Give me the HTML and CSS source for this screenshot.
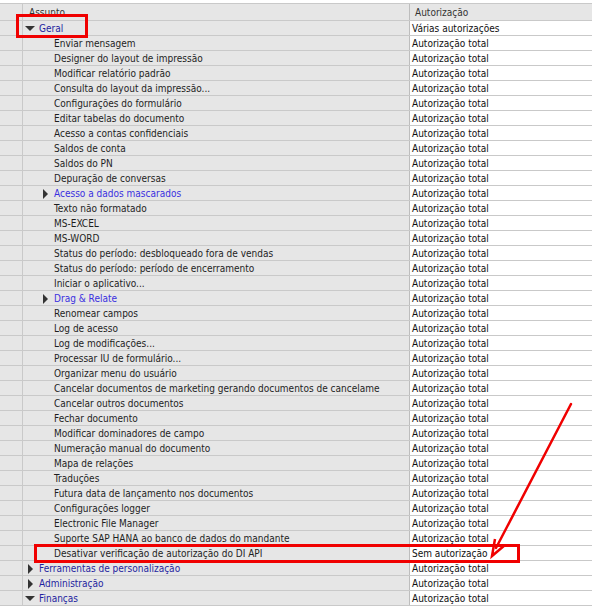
FILE: index.html
```html
<!DOCTYPE html>
<html lang="pt">
<head>
  <meta charset="UTF-8" />
  <meta name="viewport" content="width=device-width, initial-scale=1.0" />
  <title>Autorizações gerais</title>
  <link rel="stylesheet" href="styles.css">
</head>
<body>
  <div class="grid">
    <div class="row head">
      <div class="gutter"></div>
      <div class="subj">Assunto</div>
      <div class="auth">Autorização</div>
    </div>

    <div class="row"><div class="gutter"></div><div class="subj lvl1 link"><span class="tog open"></span>Geral</div><div class="auth">Várias autorizações</div></div>
    <div class="row"><div class="gutter"></div><div class="subj lvl2"><span class="tog"></span>Enviar mensagem</div><div class="auth">Autorização total</div></div>
    <div class="row"><div class="gutter"></div><div class="subj lvl2"><span class="tog"></span>Designer do layout de impressão</div><div class="auth">Autorização total</div></div>
    <div class="row"><div class="gutter"></div><div class="subj lvl2"><span class="tog"></span>Modificar relatório padrão</div><div class="auth">Autorização total</div></div>
    <div class="row"><div class="gutter"></div><div class="subj lvl2"><span class="tog"></span>Consulta do layout da impressão...</div><div class="auth">Autorização total</div></div>
    <div class="row"><div class="gutter"></div><div class="subj lvl2"><span class="tog"></span>Configurações do formulário</div><div class="auth">Autorização total</div></div>
    <div class="row"><div class="gutter"></div><div class="subj lvl2"><span class="tog"></span>Editar tabelas do documento</div><div class="auth">Autorização total</div></div>
    <div class="row"><div class="gutter"></div><div class="subj lvl2"><span class="tog"></span>Acesso a contas confidenciais</div><div class="auth">Autorização total</div></div>
    <div class="row"><div class="gutter"></div><div class="subj lvl2"><span class="tog"></span>Saldos de conta</div><div class="auth">Autorização total</div></div>
    <div class="row"><div class="gutter"></div><div class="subj lvl2"><span class="tog"></span>Saldos do PN</div><div class="auth">Autorização total</div></div>
    <div class="row"><div class="gutter"></div><div class="subj lvl2"><span class="tog"></span>Depuração de conversas</div><div class="auth">Autorização total</div></div>
    <div class="row"><div class="gutter"></div><div class="subj lvl2 link2"><span class="tog closed"></span>Acesso a dados mascarados</div><div class="auth">Autorização total</div></div>
    <div class="row"><div class="gutter"></div><div class="subj lvl2"><span class="tog"></span>Texto não formatado</div><div class="auth">Autorização total</div></div>
    <div class="row"><div class="gutter"></div><div class="subj lvl2"><span class="tog"></span>MS-EXCEL</div><div class="auth">Autorização total</div></div>
    <div class="row"><div class="gutter"></div><div class="subj lvl2"><span class="tog"></span>MS-WORD</div><div class="auth">Autorização total</div></div>
    <div class="row"><div class="gutter"></div><div class="subj lvl2"><span class="tog"></span>Status do período: desbloqueado fora de vendas</div><div class="auth">Autorização total</div></div>
    <div class="row"><div class="gutter"></div><div class="subj lvl2"><span class="tog"></span>Status do período: período de encerramento</div><div class="auth">Autorização total</div></div>
    <div class="row"><div class="gutter"></div><div class="subj lvl2"><span class="tog"></span>Iniciar o aplicativo...</div><div class="auth">Autorização total</div></div>
    <div class="row"><div class="gutter"></div><div class="subj lvl2 link2"><span class="tog closed"></span>Drag &amp; Relate</div><div class="auth">Autorização total</div></div>
    <div class="row"><div class="gutter"></div><div class="subj lvl2"><span class="tog"></span>Renomear campos</div><div class="auth">Autorização total</div></div>
    <div class="row"><div class="gutter"></div><div class="subj lvl2"><span class="tog"></span>Log de acesso</div><div class="auth">Autorização total</div></div>
    <div class="row"><div class="gutter"></div><div class="subj lvl2"><span class="tog"></span>Log de modificações...</div><div class="auth">Autorização total</div></div>
    <div class="row"><div class="gutter"></div><div class="subj lvl2"><span class="tog"></span>Processar IU de formulário...</div><div class="auth">Autorização total</div></div>
    <div class="row"><div class="gutter"></div><div class="subj lvl2"><span class="tog"></span>Organizar menu do usuário</div><div class="auth">Autorização total</div></div>
    <div class="row"><div class="gutter"></div><div class="subj lvl2"><span class="tog"></span>Cancelar documentos de marketing gerando documentos de cancelame</div><div class="auth">Autorização total</div></div>
    <div class="row"><div class="gutter"></div><div class="subj lvl2"><span class="tog"></span>Cancelar outros documentos</div><div class="auth">Autorização total</div></div>
    <div class="row"><div class="gutter"></div><div class="subj lvl2"><span class="tog"></span>Fechar documento</div><div class="auth">Autorização total</div></div>
    <div class="row"><div class="gutter"></div><div class="subj lvl2"><span class="tog"></span>Modificar dominadores de campo</div><div class="auth">Autorização total</div></div>
    <div class="row"><div class="gutter"></div><div class="subj lvl2"><span class="tog"></span>Numeração manual do documento</div><div class="auth">Autorização total</div></div>
    <div class="row"><div class="gutter"></div><div class="subj lvl2"><span class="tog"></span>Mapa de relações</div><div class="auth">Autorização total</div></div>
    <div class="row"><div class="gutter"></div><div class="subj lvl2"><span class="tog"></span>Traduções</div><div class="auth">Autorização total</div></div>
    <div class="row"><div class="gutter"></div><div class="subj lvl2"><span class="tog"></span>Futura data de lançamento nos documentos</div><div class="auth">Autorização total</div></div>
    <div class="row"><div class="gutter"></div><div class="subj lvl2"><span class="tog"></span>Configurações logger</div><div class="auth">Autorização total</div></div>
    <div class="row"><div class="gutter"></div><div class="subj lvl2"><span class="tog"></span>Electronic File Manager</div><div class="auth">Autorização total</div></div>
    <div class="row"><div class="gutter"></div><div class="subj lvl2"><span class="tog"></span>Suporte SAP HANA ao banco de dados do mandante</div><div class="auth">Autorização total</div></div>
    <div class="row"><div class="gutter"></div><div class="subj lvl2"><span class="tog"></span>Desativar verificação de autorização do DI API</div><div class="auth">Sem autorização</div></div>
    <div class="row"><div class="gutter"></div><div class="subj lvl1 link"><span class="tog closed"></span>Ferramentas de personalização</div><div class="auth">Autorização total</div></div>
    <div class="row"><div class="gutter"></div><div class="subj lvl1 link"><span class="tog closed"></span>Administração</div><div class="auth">Autorização total</div></div>
    <div class="row"><div class="gutter"></div><div class="subj lvl1 link"><span class="tog open"></span>Finanças</div><div class="auth">Autorização total</div></div>

    <!-- annotations drawn over the screenshot -->
    <div class="mark mark-geral"></div>
    <div class="mark mark-diapi"></div>
    <svg class="arrow" width="592" height="609" viewBox="0 0 592 609">
      <line x1="571" y1="404" x2="496" y2="548" stroke="#f00000" stroke-width="2.5" stroke-linecap="round" />
      <polyline points="495,539 492,556 505,545" fill="none" stroke="#f00000" stroke-width="2.5" stroke-linejoin="miter" />
    </svg>
  </div>
</body>
</html>
```

FILE: styles.css
```css
body {
  margin: 0;
  padding: 0;
  background-color: white;
  font-family: "DejaVu Sans Condensed", "Liberation Sans", Arial, sans-serif;
  font-size: 10px;
  color: #1e1e1e;
}
.grid {
  position: relative;
  width: 592px;
  height: 609px;
  padding-top: 3px;
  box-sizing: border-box;
}
.row {
  display: grid;
  grid-template-columns: 23px 387px 1fr;
  height: 15px;
  border-bottom: 1px solid #c9c9c9;
  box-sizing: border-box;
}
.row.head {
  height: 18px;
  border-top: 1px solid #c9c9c9;
  background-color: #e6e6e6;
}
.gutter {
  background-color: #e6e6e6;
  border-right: 1px solid #c9c9c9;
}
.subj {
  display: flex;
  align-items: center;
  padding-top: 2px;
  background-color: #e6e6e6;
  border-right: 1px solid #bdbdbd;
  white-space: nowrap;
  overflow: hidden;
  line-height: 12px;
}
.auth {
  display: flex;
  align-items: center;
  padding-top: 2px;
  padding-left: 2px;
  background-color: white;
  color: #101010;
  white-space: nowrap;
  overflow: hidden;
  line-height: 12px;
}
.head .subj { padding-left: 6px; padding-top: 1px; color: #333; }
.head .auth { padding-left: 5px; padding-top: 1px; background-color: #e6e6e6; color: #333; }

.tog {
  display: inline-block;
  flex: none;
  width: 16px;
  height: 12px;
  position: relative;
}
.lvl2 { padding-left: 15px; }
.tog.open::before {
  content: "";
  position: absolute;
  left: 2px;
  top: 3px;
  border-left: 5px solid transparent;
  border-right: 5px solid transparent;
  border-top: 5px solid #333;
}
.tog.closed::before {
  content: "";
  position: absolute;
  left: 5px;
  top: 1px;
  border-top: 5px solid transparent;
  border-bottom: 5px solid transparent;
  border-left: 5px solid #333;
}
.link { color: #1f1fa0; }
.link2 { color: #3a30e0; }

.mark {
  position: absolute;
  border: 3px solid #f00000;
  box-sizing: border-box;
}
.mark-geral { left: 16px; top: 14px; width: 72px; height: 24px; }
.mark-diapi { left: 34px; top: 544px; width: 486px; height: 19px; }
.arrow {
  position: absolute;
  left: 0;
  top: 0;
  pointer-events: none;
}
```
